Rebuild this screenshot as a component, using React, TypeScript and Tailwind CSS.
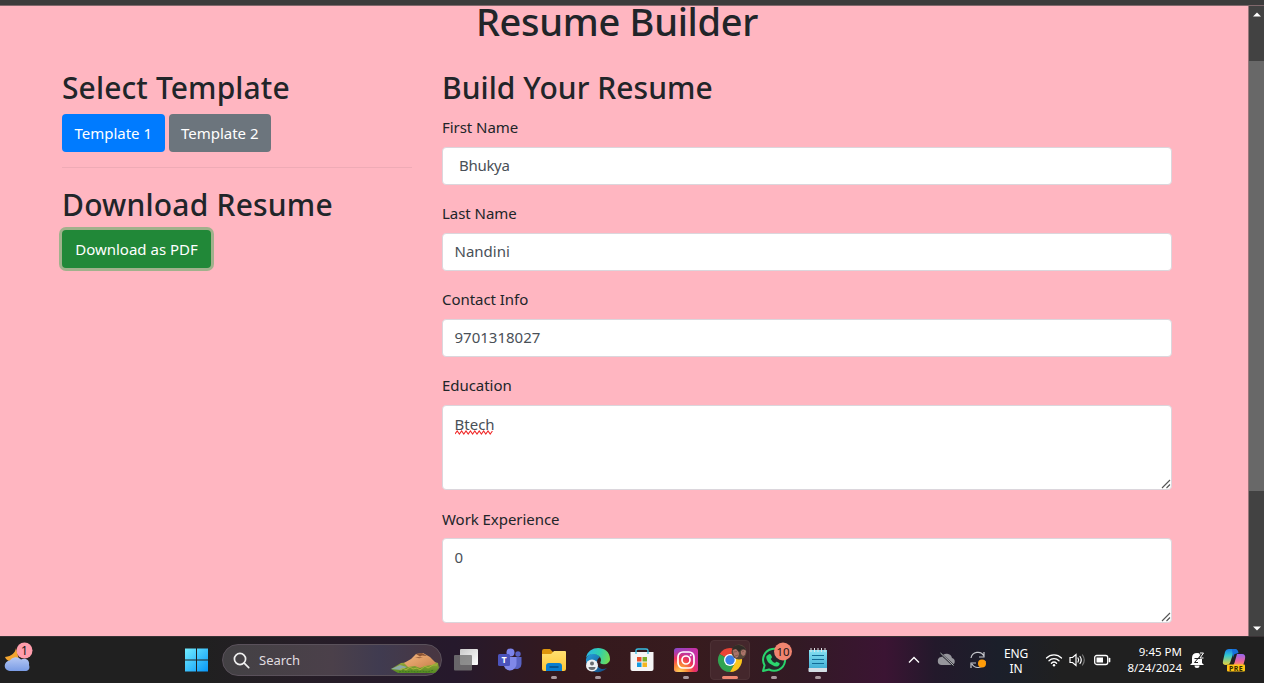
import type { ReactNode } from "react";

const inputs = [
  { label: "First Name", value: "Bhukya", pad: "pl-4", track: "tracking-[-0.02em]" },
  { label: "Last Name", value: "Nandini", pad: "pl-[11.5px]", track: "tracking-normal" },
  { label: "Contact Info", value: "9701318027", pad: "pl-[11.5px]", track: "tracking-normal" },
];

function Field({ label, children }: { label: string; children: ReactNode }) {
  return (
    <div className="mb-4">
      <div className="mb-2 flex h-6 items-center whitespace-nowrap pt-[2px] text-[15px] tracking-[-0.05px] text-[#212529]">{label}</div>
      {children}
    </div>
  );
}

function Area({ value, wavy }: { value: string; wavy?: boolean }) {
  return (
    <div className="relative h-[85.3px] rounded-[4px] border border-[#dbd6dc] bg-white px-[11.5px] pt-[6px] text-[15px] leading-6 text-[#495057]">
      <span className="relative inline-block">
        {value}
        {wavy && (
          <svg className="absolute left-0 top-[18.5px]" width="40" height="5" viewBox="0 0 40 5" fill="none" stroke="#f02a2a" strokeWidth="1.1">
            <path d="M0 4l2.200-3 2.200 3 2.200-3 2.200 3 2.200-3 2.200 3 2.200-3 2.200 3 2.200-3 2.200 3 2.200-3 2.200 3 2.200-3 2.200 3 2.200-3 2.200 3 2.200-3" />
          </svg>
        )}
      </span>
      <svg className="absolute bottom-0 right-0" width="10" height="10" viewBox="0 0 10 10" stroke="#555" strokeWidth="1.1">
        <path d="M1 9l8-8M5.5 9L9 5.500" />
      </svg>
    </div>
  );
}

function Slot({ children, mark, active }: { children: ReactNode; mark?: boolean; active?: boolean }) {
  return (
    <div className={active ? "relative flex h-[40px] w-10 mx-0.5 items-center justify-center rounded-[4px] border border-[#4d3135] bg-[#44272c]" : "relative flex h-10 w-11 items-center justify-center"}>
      {children}
      {mark && <span className="absolute bottom-px left-1/2 h-[3px] w-[6px] -translate-x-1/2 rounded-full bg-[#aa999f]" />}
      {active && <span className="absolute bottom-0 left-1/2 h-[3px] w-4 -translate-x-1/2 rounded-full bg-[#f18772]" />}
    </div>
  );
}

function Weather() {
  return (
    <svg className="overflow-visible" width="32" height="32" viewBox="0 0 32 32">
      <defs><linearGradient id="cloud" x2="0" y2="1"><stop stopColor="#b5c8f4" /><stop offset="1" stopColor="#7a9ce5" /></linearGradient></defs>
      <path d="M14 4c-1 5-4 8-11 9 2 5 10 7 14 3z" fill="#f2a530" />
      <path d="M8 27a5.200 5.200 0 0 1-.2-10.400A7 7 0 0 1 19 15.500c5-2 9 1 8 5.500 1.500 4-1 6-4 6z" fill="url(#cloud)" />
      <circle cx="22.500" cy="6.500" r="8" fill="#ff9dac" />
      <text x="22.500" y="10.800" fontSize="12" textAnchor="middle" fill="#171717" fontFamily="Noto Sans, sans-serif">1</text>
    </svg>
  );
}

function WindowsLogo() {
  return (
    <svg width="24" height="24" viewBox="0 0 24 24">
      <defs><linearGradient id="win" x2="1" y2="1"><stop stopColor="#72edff" /><stop offset="1" stopColor="#0796f7" /></linearGradient></defs>
      <path d="M0 .500h11v11H0zM12 .500h11v11h-11zM0 12.500h11v11H0zM12 12.500h11v11h-11z" fill="url(#win)" />
    </svg>
  );
}

function Hill() {
  return (
    <svg width="50" height="24" viewBox="0 0 50 24">
      <defs>
        <linearGradient id="rock" x2="1" y2="1"><stop stopColor="#f0b682" /><stop offset=".5" stopColor="#e09d66" /><stop offset="1" stopColor="#c67f4b" /></linearGradient>
        <linearGradient id="grass" x2="0" y2="1"><stop stopColor="#a0a93b" /><stop offset="1" stopColor="#548b23" /></linearGradient>
      </defs>
      <path d="M0 18l10-6 10-1 20-1 7 2 1 5-4 5H7z" fill="url(#grass)" />
      <path d="M13 12l7-4 5-5 7-1 7 4 6 6-4 2-7 1-5 2-5-2-7 1z" fill="url(#rock)" />
      <path d="M25 3l6-1 5 3-5-.5-2 1zM24 6l8 .5-4 .8z" fill="#8c5434" />
      <path d="M0 18l9-4 7 2-6 3z" fill="#8da8a5" />
      <path d="M9 19l3-2 3 2 4-3 3 2 4-1 3 2 5-4 3 2 5-3 4 0" fill="none" stroke="#a8b83a" />
      <path d="M8 21l4-1 4 1 4-1 5 1 6-1 5 1 7-2" fill="none" stroke="#3c771f" strokeDasharray="2 1" />
    </svg>
  );
}

function TaskView() {
  return (
    <svg width="26" height="26" viewBox="0 0 26 26">
      <defs><linearGradient id="pane" x2="1" y2="1"><stop stopColor="#c9c9c9" /><stop offset="1" stopColor="#fff" /></linearGradient></defs>
      <rect x="7" y="2" width="18" height="16" rx="1" fill="url(#pane)" />
      <rect x="1" y="8" width="18" height="15.500" rx="1" fill="#777" fillOpacity=".82" />
    </svg>
  );
}

function Teams() {
  return (
    <svg width="26" height="26" viewBox="0 0 26 26">
      <circle cx="13.500" cy="5.500" r="4" fill="#7b83eb" /><circle cx="21" cy="7" r="2.700" fill="#5961c6" />
      <path d="M16.500 10h8v7a5 5 0 0 1-8 4z" fill="#5963c4" />
      <path d="M6.500 10h13v7a6.500 6.500 0 0 1-13 0z" fill="#8088e8" />
      <rect x="1" y="7" width="12" height="12" rx="1.500" fill="#4b53bc" />
      <text x="7" y="16.200" textAnchor="middle" fill="white" fontSize="9" fontWeight="700" fontFamily="Noto Sans, sans-serif">T</text>
    </svg>
  );
}

function Explorer() {
  return (
    <svg width="26" height="26" viewBox="0 0 26 26">
      <defs><linearGradient id="folder" x2="0" y2="1"><stop stopColor="#ffe071" /><stop offset="1" stopColor="#ffc735" /></linearGradient></defs>
      <path d="M1 4q0-2 2-2h6l3 3h11q2 0 2 2v14H1z" fill="#dd950c" />
      <path d="M1 7h9l3-3h11q1 0 1 1v17q0 2-2 2H3q-2 0-2-2z" fill="url(#folder)" />
      <path d="M5 24v-5q0-3 3-3h10q3 0 3 3v5z" fill="#087ed0" /><path d="M9 20h8" stroke="#054b81" strokeWidth="1.500" strokeLinecap="round" />
    </svg>
  );
}

function Edge() {
  return (
    <svg width="26" height="26" viewBox="0 0 26 26">
      <defs>
        <linearGradient id="edgeTop" y1=".3" x2="1" y2=".5"><stop stopColor="#2ab8e9" /><stop offset=".55" stopColor="#31cfad" /><stop offset="1" stopColor="#72dc55" /></linearGradient>
        <linearGradient id="edgeLow" x2="1" y2="1"><stop stopColor="#269fdd" /><stop offset="1" stopColor="#124981" /></linearGradient>
      </defs>
      <path d="M1 12a12 12 0 0 0 21 9c-6 3-11-1-10-6 0-3 2-4 3-5C11 5 3 6 1 12z" fill="url(#edgeLow)" />
      <path d="M1 11C3-3 25-2 25 12c0 4-4 6-8 5-3-1-1-2-1-4 0-6-11-9-15-2z" fill="url(#edgeTop)" />
      <circle cx="7" cy="18.500" r="6" fill="#eef0f3" /><circle cx="7" cy="16.500" r="2" fill="#686c70" /><path d="M3.500 20h7q0 3-3.500 3t-3.500-3z" fill="#686c70" />
    </svg>
  );
}

function Store() {
  return (
    <svg width="26" height="26" viewBox="0 0 26 26">
      <path d="M1.500 5h23v17q0 2-2 2h-19q-2 0-2-2z" fill="#f4f4f5" />
      <path d="M7 7V3.500Q7 2 9 2h8q2 0 2 1.500V7" fill="none" stroke="#38bfe3" strokeWidth="1.300" />
      <path d="M8 10h4.500v4.500H8z" fill="#e94d29" /><path d="M13.500 10H18v4.500h-4.500z" fill="#79af28" /><path d="M8 15.500h4.500V20H8z" fill="#129ae0" /><path d="M13.500 15.500H18V20h-4.500z" fill="#f3b620" />
    </svg>
  );
}

function Instagram() {
  return (
    <svg width="26" height="26" viewBox="0 0 26 26">
      <defs>
        <linearGradient id="instaBase" x2="1"><stop stopColor="#7950d0" /><stop offset="1" stopColor="#d12e9d" /></linearGradient>
        <radialGradient id="insta" cx=".25" cy="1" r="1"><stop stopColor="#ffd45c" /><stop offset=".3" stopColor="#fb8938" /><stop offset=".6" stopColor="#ec315d" /><stop offset="1" stopColor="#c22ab1" stopOpacity=".15" /></radialGradient>
      </defs>
      <rect x="1" y="1" width="24" height="24" rx="3" fill="url(#instaBase)" /><rect x="1" y="1" width="24" height="24" rx="3" fill="url(#insta)" />
      <rect x="5" y="5" width="16" height="16" rx="5" fill="none" stroke="#fff" strokeWidth="1.700" /><circle cx="13" cy="13" r="4" fill="none" stroke="#fff" strokeWidth="1.700" /><circle cx="17.700" cy="8.300" r="1" fill="#fff" />
    </svg>
  );
}

function Chrome() {
  return (
    <svg className="overflow-visible" width="26" height="26" viewBox="0 0 26 26">
      <path d="M13 13L2.600 7a12 12 0 0 1 20.800 0z" fill="#e94335" /><path d="M13 13L2.600 7A12 12 0 0 0 13 25l5-9z" fill="#31a451" /><path d="M13 13l5 3-5 9A12 12 0 0 0 23.400 7H13z" fill="#fbc51b" />
      <circle cx="13" cy="13" r="6" fill="#fff" /><circle cx="13" cy="13" r="4.700" fill="#397fe9" />
      <circle cx="22" cy="5" r="7.500" fill="#57483b" />
      <path d="M16 3q2-3 5-1l1 5-1 3-2 1q-3-3-3-8zM24 4l3-2 2 2-1 4-2 1-2-2z" fill="#a97368" />
      <path d="M15 3q1-5 7-5l5 2 2 3-4-1-3 3-3-3z" fill="#302c27" />
      <path d="M17 5l3-.5M25 5l2-1M18 9l3-1" stroke="#7a5045" strokeWidth=".7" />
    </svg>
  );
}

function WhatsApp() {
  return (
    <svg className="overflow-visible" width="26" height="26" viewBox="0 0 26 26">
      <path d="M2 24l1.600-5.700A11 11 0 1 1 8 22.500z" fill="#24282a" stroke="#29d46b" strokeWidth="2" strokeLinejoin="round" />
      <path d="M7 8q2-2 3 0l1 2q0 1-1.300 2 1.500 3 4.500 4 1-2 2-1l2 1q1 .6 0 2-2 3-7 0-6-3-6-8 .3-1.300 1.800-2z" fill="#2bd66e" />
      <circle cx="22" cy="4.500" r="9" fill="#f08470" /><text x="22" y="8.700" textAnchor="middle" fontSize="11.500" fontFamily="Noto Sans, sans-serif" fill="#201615">10</text>
    </svg>
  );
}

function Notepad() {
  return (
    <svg width="26" height="26" viewBox="0 0 26 26">
      <defs><linearGradient id="note" x2="0" y2="1"><stop stopColor="#87e2f3" /><stop offset="1" stopColor="#35a6d0" /></linearGradient></defs>
      <path d="M4 3h18v21q0 1-1 1H5q-1 0-1-1z" fill="url(#note)" /><path d="M3.500 21h18.500v3q0 1-1 1H4.500q-1 0-1-1z" fill="#d4dfe5" />
      <path d="M7 8.500h12M7 12.500h12M7 16.500h12" stroke="#126c96" strokeWidth="1.200" /><path d="M6 1v4m3.500-4v4M13 1v4m3.500-4v4M20 1v4" stroke="#e0e4e7" />
    </svg>
  );
}

function Cloud() {
  return <svg width="20" height="18" viewBox="0 0 20 18"><path d="M5 14a4 4 0 0 1-.4-8A5.500 5.500 0 0 1 15 7a3.600 3.600 0 0 1 0 7z" fill="#96969c" /><path d="M3 2l14 13" stroke="#1f2028" strokeWidth="2" /><path d="M3.500 2l13 12.500" stroke="#b9b9bd" /></svg>;
}

function Sync() {
  return <svg width="18" height="18" viewBox="0 0 18 18" fill="none" stroke="#c6c8cd" strokeWidth="1.200"><path d="M2 7a7 7 0 0 1 13-2M15 1v5h-5M16 10a7 7 0 0 1-13 3M2 17v-5h5" /><circle cx="13" cy="12.500" r="4" fill="#ff9c08" stroke="none" /></svg>;
}

function Wifi() {
  return <svg width="18" height="16" viewBox="0 0 18 16" fill="none" stroke="white" strokeWidth="1.300" strokeLinecap="round"><path d="M1.500 6a10.500 10.500 0 0 1 15 0M4 8.800a7 7 0 0 1 10 0M6.400 11.200a3.800 3.800 0 0 1 5.200 0" /><circle cx="9" cy="13.200" r="1.200" fill="white" stroke="none" /></svg>;
}

function Sound() {
  return <svg width="17" height="16" viewBox="0 0 17 16" fill="none" stroke="white" strokeWidth="1.200" strokeLinecap="round"><path d="M1 5.500h2.500L7 2.500v11l-3.500-3H1z" /><path d="M9 6q1.300 2 0 4M11 4.500q2.500 3.500 0 7" /><path d="M13.500 3q3.500 5 0 10" stroke="#777" /></svg>;
}

function Battery() {
  return <svg width="17" height="12" viewBox="0 0 17 12" fill="none" stroke="white"><rect x=".7" y="1.500" width="13" height="9" rx="2" strokeWidth="1.300" /><rect x="2.500" y="3.500" width="6.500" height="5" fill="white" stroke="none" /><path d="M15.500 4.500v3" strokeWidth="1.700" strokeLinecap="round" /></svg>;
}

function Bell() {
  return (
    <svg width="16" height="18" viewBox="0 0 16 18">
      <path d="M2 12V7q0-5 5-5 5 0 5 5v5l2 2H0z" fill="white" />
      <path d="M4.500 14.500h5q0 2.500-2.500 2.500t-2.500-2.500z" fill="white" />
      <path d="M4.500 7.500H8l-3.500 4H8" fill="none" stroke="#222" strokeWidth="1" />
      <path d="M9.500 2.500H13l-3.500 4.500H13" fill="none" stroke="#222" strokeWidth="2.200" />
      <path d="M10 2h3.500l-3.500 5h3.500" fill="none" stroke="white" strokeWidth="1" />
    </svg>
  );
}

function Copilot() {
  return (
    <svg width="26" height="26" viewBox="0 0 26 26">
      <defs><linearGradient id="coLeft" x2="0" y2="1"><stop stopColor="#187ce9" /><stop offset=".4" stopColor="#32c8cf" /><stop offset="1" stopColor="#e8d23c" /></linearGradient><linearGradient id="coRight" x2="0" y2="1"><stop stopColor="#9466ef" /><stop offset=".6" stopColor="#ec649d" /><stop offset="1" stopColor="#ffa154" /></linearGradient></defs>
      <path d="M4 5q1-3 4-3h8q-3 1-4 5l-3 9q-1 2-4 2-4 0-3-4z" fill="url(#coLeft)" /><path d="M11 2h3q3 0 3.500 4L14 7q-1 0-2 4z" fill="#1770da" />
      <path d="M16 7h5q4 0 3 5l-2 7H10q3 0 4-5z" fill="url(#coRight)" />
      <rect x="6" y="17.500" width="18" height="7" rx="1" fill="#ffc414" /><text x="15" y="23.800" textAnchor="middle" fontFamily="Noto Sans, sans-serif" fontSize="7" fontWeight="700" letterSpacing=".3" fill="#332800">PRE</text>
    </svg>
  );
}

export default function App() {
  return (
    <div className="flex h-[683px] w-[1264px] flex-col overflow-hidden bg-[#202020] font-['Noto_Sans',sans-serif]">
      <div className="h-[6px] shrink-0 border-b border-[#80686c] bg-[#3c3c3c]" />
      <div className="flex h-[630px] shrink-0">
        <main className="flow-root w-[1249px] shrink-0 border-r border-[#99767b] bg-[#ffb6c1] text-[#212529]">
          <h1 className="flex h-[31px] items-center justify-center pr-[14px] text-[38px] font-medium leading-[31px] tracking-[-0.3px]"><span>Resume Builder</span></h1>
          <div className="mt-[32px] flex">
            <aside className="ml-[62px] w-[350px] shrink-0">
              <h2 className="mb-[7px] flex h-[38px] items-center whitespace-nowrap text-[30px] font-medium leading-none tracking-[0.12px]">Select Template</h2>
              <div className="flex gap-1 text-[15px] text-white">
                <button className="h-[37.5px] w-[102.5px] whitespace-nowrap rounded-[4px] bg-[#007bff] pt-px">Template 1</button>
                <button className="h-[37.5px] w-[102.5px] whitespace-nowrap rounded-[4px] bg-[#6c757d] pt-px">Template 2</button>
              </div>
              <hr className="mt-[15.500px] border-0 border-t border-solid border-[#efabb6]" />
              <h2 className="mb-[7px] mt-[17px] flex h-[38px] items-center whitespace-nowrap pt-px text-[30px] font-medium leading-none tracking-[0.2px]">Download Resume</h2>
              <button className="h-[37.5px] w-[149px] whitespace-nowrap rounded-[4px] bg-[#218838] pt-px text-[15px] text-white ring-3 ring-[#a1b18c]">Download as PDF</button>
            </aside>
            <section className="ml-[30px] w-[729.5px] shrink-0">
              <h2 className="mb-[7.5px] flex h-[38px] items-center whitespace-nowrap text-[30px] font-medium leading-none tracking-[0.05px]">Build Your Resume</h2>
              {inputs.map((f) => (
                <Field key={f.label} label={f.label}>
                  <div className={"flex h-[38px] items-center rounded-[4px] border border-[#dbd6dc] bg-white text-[15px] text-[#495057] " + f.pad}><span className={f.track}>{f.value}</span></div>
                </Field>
              ))}
              <Field label="Education"><Area value="Btech" wavy /></Field>
              <Field label="Work Experience"><Area value="0" /></Field>
            </section>
          </div>
        </main>
        <div className="flex w-[15px] flex-col items-center bg-[#424242]">
          <svg className="mt-[6px] shrink-0" width="8" height="5" viewBox="0 0 8 5"><path d="M0 4.500l4-4 4 4z" fill="white" /></svg>
          <div className="mt-[44px] h-[430px] w-full shrink-0 bg-[#686868]" />
          <svg className="mt-[135px] shrink-0" width="8" height="5" viewBox="0 0 8 5"><path d="M0 .5l4 4 4-4z" fill="white" /></svg>
        </div>
      </div>
      <footer className="flex h-[47px] shrink-0 items-center border-t border-[#393235] bg-[linear-gradient(90deg,#202020_0%,#202020_16%,#261d27_24%,#26192c_36%,#35191d_45%,#371b1e_55%,#321a24_63%,#3b1433_70%,#23192b_74%,#1b1f2a_79%,#202020_84%,#202020_100%)] text-white">
        <div className="ml-[2px] w-8"><Weather /></div>
        <div className="ml-[151px] w-6"><WindowsLogo /></div>
        <div className="ml-[13px] flex h-8 w-[220px] items-center rounded-full border border-[#5a515b] bg-[linear-gradient(90deg,#434144,#4b404a_50%,#403b50_72%,#493641)] pl-[10px]">
          <svg width="17" height="17" viewBox="0 0 17 17" fill="none" stroke="#efefef" strokeWidth="1.700"><circle cx="7" cy="7" r="5.600" /><path d="M11.200 11.200l4.500 4.500" strokeLinecap="round" /></svg>
          <span className="ml-[9px] mt-px text-[13px] text-[#e0dde0]">Search</span>
          <div className="ml-auto mt-[5px]"><Hill /></div>
        </div>
        <div className="ml-[2px] flex">
          <Slot><TaskView /></Slot>
          <Slot><Teams /></Slot>
          <Slot mark><Explorer /></Slot>
          <Slot mark><Edge /></Slot>
          <Slot><Store /></Slot>
          <Slot mark><Instagram /></Slot>
          <Slot active><Chrome /></Slot>
          <Slot mark><WhatsApp /></Slot>
          <Slot mark><Notepad /></Slot>
        </div>
        <svg className="ml-[67.500px] shrink-0" width="12" height="8" viewBox="0 0 12 8" fill="none" stroke="white" strokeWidth="1.400"><path d="M1 6.500l5-5 5 5" /></svg>
        <div className="ml-[17px] w-5 shrink-0"><Cloud /></div>
        <div className="ml-[12.500px] w-[18px] shrink-0"><Sync /></div>
        <div className="ml-[12px] mt-[2px] w-[34px] shrink-0 text-center text-[12px] leading-[15px] tracking-[-0.2px]">ENG<br />IN</div>
        <div className="ml-[12px] w-[18px] shrink-0"><Wifi /></div>
        <div className="ml-[6px] w-[17px] shrink-0"><Sound /></div>
        <div className="ml-[8px] w-[17px] shrink-0"><Battery /></div>
        <div className="ml-[7px] w-[64px] shrink-0 whitespace-nowrap text-right text-[11.500px] leading-4">9:45 PM<br />8/24/2024</div>
        <div className="ml-[8px] w-4 shrink-0"><Bell /></div>
        <div className="ml-[15px] w-[26px] shrink-0"><Copilot /></div>
      </footer>
    </div>
  );
}
